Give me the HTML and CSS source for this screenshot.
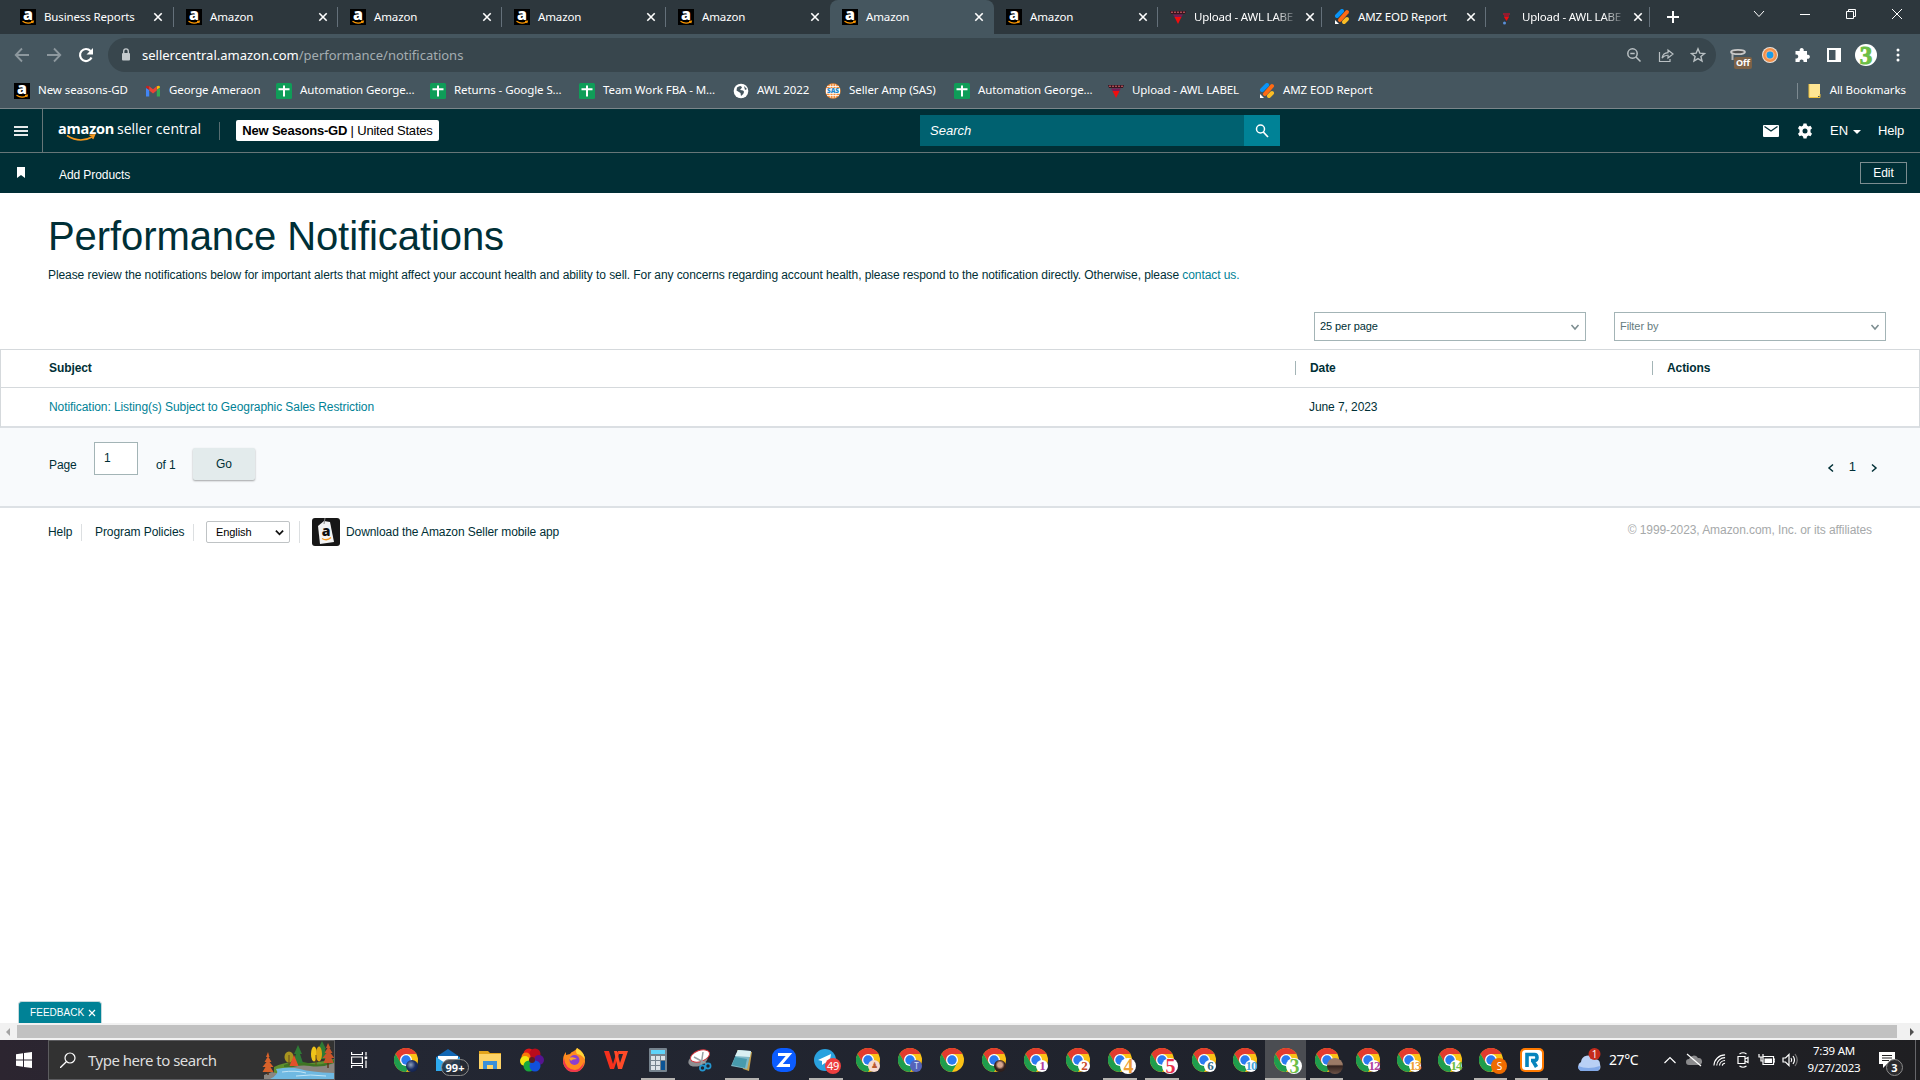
FILE: index.html
```html
<!DOCTYPE html>
<html lang="en">
<head>
    <meta charset="UTF-8">
    <meta name="viewport" content="width=device-width, initial-scale=1.0">
    <title>Performance Notifications</title>
    <link rel="stylesheet" href="styles.css">
</head>
<body>
    <!-- Shared icons -->
    <svg class="sprite" width="0" height="0">
        <symbol id="amazon" viewBox="0 0 16 16">
            <rect width="16" height="16" fill="#000"/>
            <text x="8" y="11" text-anchor="middle" font-family="Open Sans" font-weight="800" font-size="16" fill="#fff">a</text>
            <path d="M2.500 12.200q5 3.400 10 .7M11 12.200l2.400-.1-.6 2" fill="none" stroke="#f90" stroke-width="1.100"/>
        </symbol>
        <symbol id="awl" viewBox="0 0 16 16">
            <path d="M0 2h16l-1 3H1z" fill="#3a1420"/>
            <path d="M1 3.200h14" stroke="#d9676b" stroke-width="1" stroke-dasharray="2 1"/>
            <path d="M3 5.500h10L11 8.500H5z" fill="#7d1a55"/>
            <path d="M4.500 8h7L8 15z" fill="#f10d0d"/>
        </symbol>
        <symbol id="awl-small" viewBox="0 0 16 16">
            <path d="M5 5h7M6 7h5" stroke="#b3142b" stroke-width="1.500"/>
            <path d="M6 8h5l-2.500 4z" fill="#f10d0d"/>
            <circle cx="6.500" cy="14" r="1.500" fill="#5b8fd8"/>
        </symbol>
        <symbol id="eod" viewBox="0 0 16 16">
            <path d="M3 7l5-5" stroke="#0a94f5" stroke-width="4" stroke-linecap="round"/>
            <path d="M6 11l7-8" stroke="#ff6a13" stroke-width="4" stroke-linecap="round"/>
            <path d="M10 13l3-3" stroke="#fbbd24" stroke-width="4" stroke-linecap="round"/>
            <path d="M1 11l4 4H1z" fill="#fff"/>
        </symbol>
        <symbol id="sheet" viewBox="0 0 16 16">
            <rect width="16" height="16" rx="1.500" fill="#0f9d58"/>
            <path d="M2.500 6.200h11M8 2.500v11" stroke="#fff" stroke-width="2"/>
        </symbol>
        <symbol id="gmail" viewBox="0 0 16 16">
            <path d="M1 5v8.500h3.200V7z" fill="#4285f4"/>
            <path d="M15 5v8.500h-3.200V7z" fill="#34a853"/>
            <path d="M1 4.500l3.200 2.300v-3.500Q1 1.500 1 4.500z" fill="#c5221f"/>
            <path d="M15 4.500l-3.200 2.300v-3.500Q15 1.500 15 4.500z" fill="#fbbc04"/>
            <path d="M4.200 3.300L8 6.200l3.800-2.900v4.200L8 10.400 4.200 7.500z" fill="#ea4335"/>
        </symbol>
        <symbol id="x" viewBox="0 0 16 16">
            <path d="M4.300 4.300l7.400 7.400M11.700 4.300l-7.400 7.400" stroke="#fff" stroke-width="1.600"/>
        </symbol>
        <symbol id="chrome" viewBox="0 0 24 24">
            <circle cx="12" cy="12" r="12" fill="#fbc116"/>
            <path d="M12 6h10.400A12 12 0 0 0 1.600 6l5.200 9z" fill="#e33b2e"/>
            <path d="M1.600 6A12 12 0 0 0 12 24l5.200-9H12L6.800 15z" fill="#1f9d4d"/>
            <circle cx="12" cy="12" r="6" fill="#fff"/>
            <circle cx="12" cy="12" r="4.700" fill="#2b7bf0"/>
        </symbol>
        <symbol id="chevron" viewBox="0 0 10 10">
            <path d="M1.500 3l3.500 4 3.500-4" fill="none" stroke="currentColor" stroke-width="1.500"/>
        </symbol>
    </svg>

    <!-- Tab strip -->
    <div class="tab-strip">
        <div class="tab"><svg class="ico"><use href="#amazon"/></svg><span>Business Reports</span><svg class="ico"><use href="#x"/></svg></div>
        <div class="tab"><svg class="ico"><use href="#amazon"/></svg><span>Amazon</span><svg class="ico"><use href="#x"/></svg></div>
        <div class="tab"><svg class="ico"><use href="#amazon"/></svg><span>Amazon</span><svg class="ico"><use href="#x"/></svg></div>
        <div class="tab"><svg class="ico"><use href="#amazon"/></svg><span>Amazon</span><svg class="ico"><use href="#x"/></svg></div>
        <div class="tab no-line"><svg class="ico"><use href="#amazon"/></svg><span>Amazon</span><svg class="ico"><use href="#x"/></svg></div>
        <div class="tab active no-line"><svg class="ico"><use href="#amazon"/></svg><span>Amazon</span><svg class="ico"><use href="#x"/></svg></div>
        <div class="tab"><svg class="ico"><use href="#amazon"/></svg><span>Amazon</span><svg class="ico"><use href="#x"/></svg></div>
        <div class="tab"><svg class="ico"><use href="#awl"/></svg><span class="fade">Upload - AWL LABE</span><svg class="ico"><use href="#x"/></svg></div>
        <div class="tab"><svg class="ico"><use href="#eod"/></svg><span>AMZ EOD Report</span><svg class="ico"><use href="#x"/></svg></div>
        <div class="tab"><svg class="ico"><use href="#awl-small"/></svg><span class="fade">Upload - AWL LABE</span><svg class="ico"><use href="#x"/></svg></div>
        <svg class="new-tab" viewBox="0 0 12 12"><path d="M6 0v12M0 6h12" stroke="#fff" stroke-width="2"/></svg>
        <div class="window-controls">
            <svg viewBox="0 0 12 12"><path d="M1 3l5 5.500L11 3" /></svg>
            <svg viewBox="0 0 12 12"><path d="M1 6.500h10"/></svg>
            <svg viewBox="0 0 12 12"><path d="M1.500 3.500h7v7h-7zM3.500 3.500v-2h7v7h-2"/></svg>
            <svg viewBox="0 0 12 12"><path d="M1 1l10 10M11 1L1 11"/></svg>
        </div>
    </div>

    <!-- Toolbar -->
    <div class="toolbar">
        <div class="cell dim"><svg class="ico" viewBox="0 0 16 16"><path d="M15 8H2M8 1.500L1.700 8 8 14.500" fill="none" stroke="currentColor" stroke-width="1.800"/></svg></div>
        <div class="cell dim"><svg class="ico" viewBox="0 0 16 16"><path d="M1 8h13M8 1.500L14.300 8 8 14.500" fill="none" stroke="currentColor" stroke-width="1.800"/></svg></div>
        <div class="cell"><svg class="ico" viewBox="0 0 16 16"><path d="M13.500 10.500A6 6 0 1 1 12.500 4" fill="none" stroke="#fff" stroke-width="2.200"/><path d="M15 1v6.500H8.500z" fill="#fff"/></svg></div>
        <div class="omnibox">
            <svg class="ico" viewBox="0 0 16 16"><rect x="4" y="6" width="8" height="7.500" rx="1" fill="#c4cacd"/><path d="M5.700 6V4.200a2.300 2.300 0 0 1 4.600 0V6" fill="none" stroke="#c4cacd" stroke-width="1.400"/></svg>
            <div class="url">sellercentral.amazon.com<span>/performance/notifications</span></div>
            <div class="cell dim2"><svg class="ico" viewBox="0 0 16 16"><circle cx="6.500" cy="6.500" r="4.700" fill="none" stroke="currentColor" stroke-width="1.500"/><path d="M4.300 6.500h4.400M10 10l4.500 4.500" stroke="currentColor" stroke-width="1.500"/></svg></div>
            <div class="cell dim2"><svg class="ico" viewBox="0 0 16 16"><path d="M1.500 5v9.500h10.500V12M4 11q1-5 6-5.300V3l5 4-5 4V8.300Q6.500 8 4 11z" fill="none" stroke="currentColor" stroke-width="1.200"/></svg></div>
            <div class="cell dim2"><svg class="ico" viewBox="0 0 16 16"><path d="M8 1.800l1.800 4.300 4.700.4-3.600 3 1.100 4.600L8 11.600l-4 2.500 1.100-4.600-3.600-3 4.700-.4z" fill="none" stroke="currentColor" stroke-width="1.400"/></svg></div>
        </div>
        <div class="extensions">
            <div class="cell ext-off"><svg class="ico" viewBox="0 0 16 16"><ellipse cx="8" cy="5" rx="7" ry="2.200" fill="#4d4d4d" stroke="#c9c9c9" stroke-width="1.800"/><path d="M2.500 7v6" stroke="#b5b5b5" stroke-width="2"/></svg><span class="off-badge">Off</span></div>
            <div class="cell"><svg class="ico" viewBox="0 0 16 16"><circle cx="8" cy="8" r="8" fill="#e9e3dc"/><circle cx="8" cy="8" r="7" fill="#f39049"/><circle cx="8" cy="8" r="4.700" fill="#f7b283"/><circle cx="8" cy="8" r="3.400" fill="#179bea"/></svg></div>
            <div class="cell"><svg class="ico" viewBox="0 0 16 16"><path d="M1.500 4h4.300a2.100 2.100 0 1 1 3.800 0H13v3.800a2.100 2.100 0 1 1 0 3.900V15H9.500a2 2 0 1 0-3.800 0H1.500v-3.500a2.100 2.100 0 1 0 0-4z" fill="#fff"/></svg></div>
            <div class="cell"><svg class="ico" viewBox="0 0 16 16"><rect x="2" y="2" width="12" height="12" fill="none" stroke="#fff" stroke-width="2"/><rect x="9.500" y="2" width="5" height="12" fill="#fff"/></svg></div>
            <div class="cell"><div class="avatar">3</div></div>
            <div class="cell"><svg class="ico" viewBox="0 0 16 16" fill="#fff"><circle cx="8" cy="3" r="1.500"/><circle cx="8" cy="8" r="1.500"/><circle cx="8" cy="13" r="1.500"/></svg></div>
        </div>
    </div>

    <!-- Bookmarks -->
    <div class="bookmarks">
        <div class="bookmark"><svg class="ico"><use href="#amazon"/></svg><span>New seasons-GD</span></div>
        <div class="bookmark"><svg class="ico"><use href="#gmail"/></svg><span>George Ameraon</span></div>
        <div class="bookmark"><svg class="ico"><use href="#sheet"/></svg><span>Automation George...</span></div>
        <div class="bookmark"><svg class="ico"><use href="#sheet"/></svg><span>Returns - Google S...</span></div>
        <div class="bookmark"><svg class="ico"><use href="#sheet"/></svg><span>Team Work FBA - M...</span></div>
        <div class="bookmark"><svg class="ico" viewBox="0 0 16 16"><circle cx="8" cy="8" r="7.300" fill="#fff"/><path d="M4 4.500q4-3 5 0l-2 2.500q4 0 4 2t-3 4l-.5-3-4-2.500zM11 3l3 3-2 1z" fill="#45565f"/></svg><span>AWL 2022</span></div>
        <div class="bookmark"><svg class="ico" viewBox="0 0 16 16"><circle cx="8" cy="8" r="7.700" fill="#f28c38"/><path d="M2 3.500h12M2 12.500h12M8 1v14M5.500 1.500q-2 6.500 0 13M10.500 1.500q2 6.500 0 13" stroke="#fff" stroke-width=".8" fill="none"/><rect x="1" y="5.300" width="14" height="5.400" fill="#fff"/><text x="8" y="10.300" text-anchor="middle" font-family="Open Sans" font-weight="800" font-size="6.500" fill="#2187c9">SAS</text></svg><span>Seller Amp (SAS)</span></div>
        <div class="bookmark"><svg class="ico"><use href="#sheet"/></svg><span>Automation George...</span></div>
        <div class="bookmark"><svg class="ico"><use href="#awl"/></svg><span>Upload - AWL LABEL</span></div>
        <div class="bookmark"><svg class="ico"><use href="#eod"/></svg><span>AMZ EOD Report</span></div>
        <div class="all-bookmarks"><svg class="ico" viewBox="0 0 16 16"><path d="M3 1h11v12h-2v1H3z" fill="#ffe694"/><path d="M3 1v13.500h11V11" fill="none" stroke="#f0c23c"/></svg><span>All Bookmarks</span></div>
    </div>

    <!-- Seller Central header -->
    <div class="sc-header">
        <div class="menu-btn"><i></i><i></i><i></i></div>
        <div class="logo">
            <span class="logo-amazon">amazon</span><span class="logo-sc">seller central</span>
            <svg class="smile" viewBox="0 0 30 8"><path d="M1 1.500q13 8.500 26 1M23.500 1.200l5-.3-1.800 4" fill="none" stroke="#f7981d" stroke-width="1.500"/></svg>
        </div>
        <div class="account"><b>New Seasons-GD</b>&nbsp;|&nbsp;United States</div>
        <div class="search"><span>Search</span><div class="search-btn"><svg class="ico" viewBox="0 0 16 16"><circle cx="6.500" cy="6" r="4" fill="none" stroke="#fff" stroke-width="1.500"/><path d="M9.300 9l4.700 5" stroke="#fff" stroke-width="1.700"/></svg></div></div>
        <div class="sc-right">
            <svg class="ico mail" viewBox="0 0 16 16"><rect y="2" width="16" height="12" rx="1" fill="#fff"/><path d="M1.500 3.500L8 8l6.500-4.500" fill="none" stroke="#002f36" stroke-width="1.300"/></svg>
            <svg class="ico gear" viewBox="0 0 16 16"><path d="M6.500.5h3l.5 2 1.500.9 2-.7 1.500 2.600-1.500 1.500v2.400l1.500 1.500-1.500 2.600-2-.7-1.500.9-.5 2h-3l-.5-2-1.500-.9-2 .7L1 10.700l1.500-1.500V6.800L1 5.300l1.500-2.600 2 .7L6 2.500z" fill="#fff"/><circle cx="8" cy="8" r="2.500" fill="#002f36"/></svg>
            <span class="lang">EN</span><i class="caret"></i><span class="help">Help</span>
        </div>
    </div>
    <div class="sc-subnav">
        <svg class="flag" viewBox="0 0 8 11"><path d="M0 0h8v11L4 8l-4 3z" fill="#fff"/></svg>
        <span>Add Products</span>
        <div class="edit-btn">Edit</div>
    </div>

    <!-- Page content -->
    <main>
        <h1>Performance Notifications</h1>
        <p class="intro">Please review the notifications below for important alerts that might affect your account health and ability to sell. For any concerns regarding account health, please respond to the notification directly. Otherwise, please <a>contact us.</a></p>
        <div class="filters">
            <div class="dropdown">25 per page<svg><use href="#chevron"/></svg></div>
            <div class="dropdown placeholder">Filter by<svg><use href="#chevron"/></svg></div>
        </div>

        <div class="grid">
            <div class="row head"><div>Subject</div><div>Date</div><div>Actions</div></div>
            <div class="row"><div><a>Notification: Listing(s) Subject to Geographic Sales Restriction</a></div><div>June 7, 2023</div><div></div></div>
        </div>

        <div class="pagination">
            <span class="page-label">Page</span>
            <div class="page-input">1</div>
            <span class="page-of">of 1</span>
            <div class="go-btn">Go</div>
            <div class="pager"><svg class="prev"><use href="#chevron"/></svg><span>1</span><svg class="next"><use href="#chevron"/></svg></div>
        </div>

        <footer>
            <span class="f-help">Help</span>
            <span class="f-policies">Program Policies</span>
            <div class="f-lang"><div class="lang-select">English<svg viewBox="0 0 10 10"><path d="M1 3l4 4 4-4" fill="none" stroke="#111" stroke-width="2"/></svg></div></div>
            <svg class="app-icon" viewBox="0 0 28 28"><rect width="28" height="28" rx="3" fill="#171717"/><path d="M6 8l6-5 6 1 4 20-14 2z" fill="#f4f4f4"/><path d="M12 6l1-6" stroke="#888" fill="none"/><text x="14" y="18" text-anchor="middle" font-family="Open Sans" font-weight="800" font-size="14" fill="#111">a</text><path d="M10 20.500q5 3 9-1" stroke="#f7981d" fill="none" stroke-width="1.300"/></svg>
            <span>Download the Amazon Seller mobile app</span>
            <span class="copyright">© 1999-2023, Amazon.com, Inc. or its affiliates</span>
        </footer>
    </main>

    <div class="feedback">FEEDBACK<svg viewBox="0 0 8 8"><path d="M1 1l6 6M7 1L1 7" stroke="#fff" stroke-width="1.200"/></svg></div>
    <div class="scrollbar"><i class="arrow-left"></i><div class="thumb"></div><i class="arrow-right"></i></div>

    <!-- Windows taskbar -->
    <div class="taskbar">
        <div class="start"><svg viewBox="0 0 16 16" fill="#fff"><path d="M0 2.300l7-1v6.300H0zM8 1.100L16 0v7.600H8zM0 8.500h7v6.300l-7-1zM8 8.500h8V16l-8-1.100z"/></svg></div>
        <div class="win-search">
            <svg class="lens" viewBox="0 0 16 16"><circle cx="10" cy="6" r="5" fill="none" stroke="#fff" stroke-width="1.200"/><path d="M6.300 9.700L0 16" stroke="#fff" stroke-width="1.300"/></svg>
            <span>Type here to search</span>
            <svg class="scene" viewBox="0 0 72 38">
                <path d="M12 26Q24 20 34 22T72 18v20H12z" fill="#5f8f2d"/>
                <path d="M22 24q12-6 24-2t26-3v8q-26 2-50-1z" fill="#3f7424"/>
                <path d="M22 29q14-6 26-4t24-3v16H30z" fill="#8b8680"/>
                <path d="M2 34l8-3 8 2v5H2z" fill="#8b8680"/>
                <path d="M14 28q14-3 24 0t34 4v6H8q10-5 6-10z" fill="#6fb9e2"/>
                <path d="M20 31q14-2 24 1M34 35q14-2 30 0" stroke="#c3e5f6" fill="none"/>
                <path d="M36 4l-4 9h2l-3 9h10l-3-9h2z" fill="#2f7a35"/>
                <path d="M60 0l-4 8h2l-3 10h11l-3-10h1z" fill="#2f7a35"/>
                <ellipse cx="27" cy="16" rx="4.500" ry="5.500" fill="#a8941f"/>
                <ellipse cx="52" cy="13" rx="3" ry="7.500" fill="#f0c419"/>
                <ellipse cx="57" cy="13" rx="3" ry="7.500" fill="#d9a514"/>
                <path d="M27 14v10M54 14v10" stroke="#6b4a1b"/>
                <path d="M32 14l-4.500 11h9z" fill="#e2512a"/>
                <path d="M6 11l-2 5h1.500l-3 5h2l-4 5h3l-3 5h11l-3-5h3l-4-5h2l-3-5h1z" fill="#d8622a"/>
                <path d="M66 2l-2 5h1.500l-3 5h2l-4 5h3l-2 5h10l-2-5h3l-4-5h2l-3-5h1z" fill="#c9552a"/>
                <path d="M6 31v3M66 22v5" stroke="#5a3618" stroke-width="1.500"/>
            </svg>
        </div>
        <div class="task-view"><svg viewBox="0 0 16 16" fill="none" stroke="#fff" stroke-width="1.200"><path d="M.6 0v2.500h10.800V0M.6 5h10.800v6.500H.6zM.6 16v-2.500h10.800V16M15 0v3.500M15 8.500V16"/><path d="M13.600 4.500h2.600v2.600h-2.600z" fill="#fff" stroke="none"/></svg></div>

        <div class="apps">
            <div class="app"><svg><use href="#chrome"/></svg><i class="badge earth"></i></div>
            <div class="app"><svg viewBox="0 0 24 24"><path d="M0 9l12-8 12 8v13H0z" fill="#1267b4"/><path d="M2 8h20v8H2z" fill="#fff"/><path d="M0 9l12 8 12-8v14H0z" fill="#2da9ee"/></svg><i class="badge count">99+</i></div>
            <div class="app"><svg viewBox="0 0 24 24"><path d="M1 3h9l2 2h11v5H1z" fill="#e3a41b"/><path d="M1 6h22v15H1z" fill="#fdd367"/><path d="M5 21v-8h14v8h-4v-4H9v4z" fill="#3a8fd8"/></svg></div>
            <div class="app"><svg viewBox="0 0 24 24"><circle cx="9" cy="6" r="5.500" fill="#e01818"/><circle cx="15" cy="6" r="5.500" fill="#b90c1c"/><circle cx="19" cy="12" r="5" fill="#55148f"/><circle cx="6" cy="9" r="4.500" fill="#f97a09"/><circle cx="5" cy="13" r="5" fill="#f5e60f"/><circle cx="9" cy="18" r="5.500" fill="#19a83c"/><circle cx="15" cy="18" r="5.500" fill="#1150dc"/><circle cx="12" cy="12" r="3" fill="#5c1d1d"/></svg></div>
            <div class="app"><svg viewBox="0 0 24 24"><path d="M12 3q3-2 3-3 8 4 8 13a11 11 0 0 1-22 0Q1 7 4 4v3l4-1q1-2 4-3z" fill="#ff8a1f"/><path d="M15 0q8 5 8 12-2-5-8-6-2-3 0-6z" fill="#ffd73a"/><path d="M2 10q1 11 11 12 6-1 9-8-1 10-10 10T1 14z" fill="#f0354e"/><circle cx="12.500" cy="12" r="5" fill="#8b3fd0"/><path d="M7 10q4-2 8 1-5 0-6 2z" fill="#ffa329"/></svg></div>
            <div class="app"><svg viewBox="0 0 24 24"><path d="M0 3h5l4 13 3-10 2-3h2l-6 18H6z" fill="#f5301d"/><path d="M10 3h3l3 12 3-9h-4l-1-3h10l-6 18h-4z" fill="#ff4a28"/></svg></div>
            <div class="app open"><svg viewBox="0 0 24 24"><rect x="3" width="18" height="24" rx="1" fill="#76838e"/><rect x="5" y="2" width="14" height="4" fill="#5fd3fa"/><path d="M5 8h4v4H5zM10 8h4v4h-4zM15 8h4v4h-4zM5 13h4v4H5zM10 13h4v4h-4zM5 18h4v4H5zM10 18h4v4h-4z" fill="#dde3e8"/><rect x="15" y="13" width="4" height="9" fill="#0b5394"/></svg></div>
            <div class="app"><svg viewBox="0 0 24 24"><ellipse cx="10" cy="12" rx="10" ry="6" transform="rotate(-20 10 12)" fill="#8d8f92"/><ellipse cx="12" cy="8" rx="10" ry="5.500" transform="rotate(-20 12 8)" fill="#fff" stroke="#d2333b"/><path d="M6 9l13 7M15 4l-2 14" stroke="#9aa0a5" stroke-width="1.500"/><circle cx="20" cy="18" r="2.600" fill="none" stroke="#2496cf" stroke-width="1.700"/><circle cx="14.500" cy="20" r="2.600" fill="none" stroke="#2496cf" stroke-width="1.700"/></svg></div>
            <div class="app open"><svg viewBox="0 0 24 24"><path d="M7 2l15 2-3 19-6-2z" fill="#c5a04e"/><path d="M8 2l13 1-4 18-16-3z" fill="#7fb9c8"/><path d="M8 2l13 1-1 6L5 8z" fill="#d9f0f2"/><path d="M5 9l12 2-2 9-13-3z" fill="#489bad"/></svg></div>
            <div class="app"><svg viewBox="0 0 24 24"><rect width="24" height="24" rx="9" fill="#0b5cff"/><path d="M6 6.500h11l-9.500 11H18" fill="none" stroke="#fff" stroke-width="3"/></svg></div>
            <div class="app open"><svg viewBox="0 0 24 24"><circle cx="11" cy="12" r="11" fill="#2aa1de"/><path d="M4 12l13-6-2 12-4-3-3 2v-4z" fill="#fff"/></svg><i class="badge red">49</i></div>
            <div class="app"><svg><use href="#chrome"/></svg><i class="badge peach">♟</i></div>
            <div class="app"><svg><use href="#chrome"/></svg><i class="badge indigo">T</i></div>
            <div class="app"><svg><use href="#chrome"/></svg></div>
            <div class="app"><svg><use href="#chrome"/></svg><i class="badge photo"></i></div>
            <div class="app"><svg><use href="#chrome"/></svg><i class="badge n1">1</i></div>
            <div class="app"><svg><use href="#chrome"/></svg><i class="badge n2">2</i></div>
            <div class="app open"><svg><use href="#chrome"/></svg><i class="badge big n4">4</i></div>
            <div class="app open"><svg><use href="#chrome"/></svg><i class="badge big n5">5</i></div>
            <div class="app"><svg><use href="#chrome"/></svg><i class="badge n6">6</i></div>
            <div class="app"><svg><use href="#chrome"/></svg><i class="badge n10">10</i></div>
            <div class="app open current"><svg><use href="#chrome"/></svg><i class="badge big n3">3</i></div>
            <div class="app open"><svg><use href="#chrome"/></svg><i class="badge big photo2"></i></div>
            <div class="app"><svg><use href="#chrome"/></svg><i class="badge n12">12</i></div>
            <div class="app"><svg><use href="#chrome"/></svg><i class="badge n13">13</i></div>
            <div class="app"><svg><use href="#chrome"/></svg><i class="badge n14">14</i></div>
            <div class="app open"><svg><use href="#chrome"/></svg><i class="badge big orange">S</i></div>
            <div class="app open"><svg viewBox="0 0 24 24"><rect width="24" height="24" rx="5" fill="#ff7a00"/><rect x="2" y="2" width="20" height="20" rx="3.500" fill="#fff"/><path d="M7 19V6.500h7.500q2.500 0 2.500 3t-2.500 3H11M13 13l3.500 6" fill="none" stroke="#0684bd" stroke-width="3.600"/></svg></div>
        </div>

        <div class="tray">
            <div class="weather"><svg viewBox="0 0 26 24"><path d="M5 23a5 5 0 0 1 0-9 7 7 0 0 1 13-3q6 0 6 5 2 7-4 7z" fill="#b9d0f5"/><path d="M5 23a5 5 0 0 1-3-5q10 4 22 0 0 5-4 5z" fill="#82a9e8"/><circle cx="18.500" cy="6" r="6" fill="#c42b1c"/><text x="18.500" y="9.500" text-anchor="middle" font-family="Open Sans" font-size="10" fill="#fff">1</text></svg><span>27°C</span></div>
            <svg class="t-up" viewBox="0 0 12 8"><path d="M.5 7L6 1.500 11.500 7"/></svg>
            <svg class="t-cloud" viewBox="0 0 16 16"><path d="M3 13a3 3 0 0 1 0-6 5 5 0 0 1 9-1 3.500 3.500 0 0 1 1 7z" fill="#8b8b8d" stroke="none"/><path d="M1 2l14 12"/></svg>
            <svg class="t-wifi" viewBox="0 0 14 14"><path d="M1 13A12 12 0 0 1 13 1.500M4 13a9 9 0 0 1 9-8.500M7 13a6 6 0 0 1 6-5.500M10 13a3 3 0 0 1 3-2.500"/></svg>
            <svg class="t-meet" viewBox="0 0 12 16"><path d="M1 4.500h7v7H1zM8 7l3-1.500v5L8 9M2.500 2Q6-.5 9.500 2M2.500 14q3.500 2.500 7 0"/></svg>
            <svg class="t-battery" viewBox="0 0 17 14"><path d="M5 3.500h10.500v8H5zM1 1v3h4V1M3 4v4h2M15.500 6H17v3h-1.500"/><path d="M6.500 5.500h7.500v4.500H6.500z" fill="#fff" stroke="none"/></svg>
            <svg class="t-vol" viewBox="0 0 16 14"><path d="M1 5h2.500L7 1.500v11L3.500 9H1zM9 5q1.500 2 0 4M11 3q3 4 0 8"/><path d="M13 1q4.500 6 0 12" stroke="#777"/></svg>
            <div class="clock"><div>7:39 AM</div><div>9/27/2023</div></div>
            <div class="notif"><svg viewBox="0 0 16 16"><path d="M0 0h16v12H8l-4 4v-4H0z" fill="#fff"/><path d="M3 3.500h10M3 6h10M3 8.500h7" stroke="#222"/></svg><i>3</i></div>
        </div>
    </div>
</body>
</html>
```

FILE: styles.css
```css
/* Global Styles */
* {
    box-sizing: border-box;
}

body {
    margin: 0;
    width: 1920px;
    height: 1080px;
    overflow: hidden;
    display: flex;
    flex-direction: column;
    font-family: "Liberation Sans", Arial, sans-serif;
    font-size: 12px;
    color: #002f36;
    background: #fff;
}

svg {
    display: block;
    flex: none;
}

i {
    font-style: normal;
}

.sprite {
    display: none;
}

.ico {
    width: 16px;
    height: 16px;
}

/* Tab strip */
.tab-strip {
    height: 34px;
    padding-left: 9px;
    display: flex;
    background: #2d373d;
    font-family: "Noto Sans", sans-serif;
    font-size: 11.5px;
    color: #fff;
}

.tab {
    position: relative;
    flex: none;
    width: 164px;
    padding: 0 7px 0 12px;
    display: flex;
    align-items: center;
    gap: 8px;
}

.tab:first-child {
    width: 165px;
}

.tab-strip .tab:nth-child(1) {
    width: 165px;
    padding: 0 8px 0 11px;
}

.tab span {
    flex: 1;
    padding-bottom: 2px;
    white-space: nowrap;
    letter-spacing: -0.13px;
}

.tab .fade {
    flex: 0 0 104px;
    margin-right: -4px;
    letter-spacing: -0.2px;
    -webkit-mask-image: linear-gradient(to right, #000 78%, rgba(0, 0, 0, 0.1) 98%);
    mask-image: linear-gradient(to right, #000 78%, rgba(0, 0, 0, 0.1) 98%);
}

.tab::after {
    content: "";
    position: absolute;
    right: 0;
    top: 7px;
    width: 1px;
    height: 20px;
    background: #64707a;
}

.tab.no-line::after {
    display: none;
}

.tab.active {
    background: #45565f;
    border-radius: 8px 8px 0 0;
}

.new-tab {
    width: 12px;
    height: 12px;
    margin: 11px 0 0 17px;
}

.window-controls {
    margin: 8px 17px 0 auto;
    display: flex;
    gap: 34px;
}

.window-controls svg {
    width: 12px;
    height: 12px;
    fill: none;
    stroke: #fff;
}

/* Toolbar */
.toolbar {
    height: 39px;
    padding: 4px 6px 1px;
    display: flex;
    background: #45565f;
}

.cell {
    position: relative;
    width: 32px;
    height: 34px;
    display: flex;
    align-items: center;
    justify-content: center;
}

.dim {
    color: #8d989e;
}

.dim2 {
    color: #b9c0c3;
}

.omnibox {
    width: 1608px;
    height: 34px;
    margin: 0 6px;
    padding: 0 2px 0 10px;
    display: flex;
    align-items: center;
    border-radius: 17px;
    background: #38464d;
}

.url {
    flex: 1;
    margin-left: 8px;
    font-family: "Noto Sans", sans-serif;
    font-size: 13px;
    letter-spacing: 0;
    color: #fff;
}

.url span {
    color: #a4adb1;
}

.extensions {
    display: flex;
}

.off-badge {
    position: absolute;
    left: 12px;
    top: 19px;
    width: 18px;
    height: 12px;
    border-radius: 2px;
    background: #7d6247;
    color: #fff;
    font: bold 9px/12px "Open Sans", sans-serif;
    text-align: center;
}

.avatar {
    width: 22px;
    height: 22px;
    border-radius: 50%;
    background: #fff;
    color: #6cbe45;
    font: bold 25px/23px "Liberation Serif", serif;
    text-align: center;
    -webkit-text-stroke: 1px #6cbe45;
}

/* Bookmarks */
.bookmarks {
    height: 36px;
    padding: 0 14px;
    display: grid;
    grid-template-columns: 131px 131px 154px 149px 154px 92px 129px 154px 151px 160px 1fr;
    align-items: center;
    background: #45565f;
    border-bottom: 1px solid #7b868a;
    color: #fff;
    font-family: "Noto Sans", sans-serif;
    font-size: 11.5px;
    letter-spacing: -0.08px;
}

.bookmark, .all-bookmarks {
    display: flex;
    align-items: center;
    gap: 8px;
    white-space: nowrap;
}

.bookmarks span {
    padding-bottom: 2px;
}

.all-bookmarks {
    justify-self: end;
    height: 16px;
    padding-left: 8px;
    border-left: 1px solid #7d8a91;
}

/* Seller Central header */
.sc-header {
    height: 44px;
    display: flex;
    align-items: center;
    background: #002f36;
    border-bottom: 1px solid #677678;
    color: #fff;
    font-size: 13px;
}

.menu-btn {
    width: 43px;
    height: 43px;
    padding-left: 14px;
    display: flex;
    flex-direction: column;
    justify-content: center;
    gap: 2px;
    border-right: 1px solid #677678;
}

.menu-btn i {
    width: 14px;
    height: 2px;
    background: #e6eaeb;
}

.logo {
    position: relative;
    width: 177px;
    height: 18px;
    padding-left: 15px;
    border-right: 1px solid #566d71;
    font-family: "Open Sans", sans-serif;
    line-height: 14px;
    white-space: nowrap;
}

.logo-amazon {
    display: inline-block;
    width: 59px;
    font-size: 14.5px;
    font-weight: 700;
    letter-spacing: -0.2px;
}

.logo-sc {
    font-size: 14px;
    letter-spacing: 0;
}

.smile {
    position: absolute;
    left: 23px;
    top: 12px;
    width: 30px;
    height: 8px;
}

.account {
    width: 203px;
    height: 21px;
    margin-left: 16px;
    border-radius: 2px;
    background: #fff;
    color: #000;
    line-height: 21px;
    text-align: center;
    white-space: nowrap;
    letter-spacing: -0.2px;
}

.search {
    width: 360px;
    height: 31px;
    margin-left: 481px;
    padding-left: 10px;
    display: flex;
    align-items: center;
    justify-content: space-between;
    background: #006170;
    font-style: italic;
}

.search-btn {
    width: 36px;
    height: 31px;
    display: flex;
    align-items: center;
    justify-content: center;
    background: #008296;
}

.sc-right {
    margin-left: auto;
    padding-right: 16px;
    display: flex;
    align-items: center;
}

.gear {
    margin: 0 17px 0 18px;
}

.caret {
    margin: 2px 17px 0 5px;
    border: 4px solid transparent;
    border-top-color: #fff;
    border-bottom: 0;
}

.help {
    letter-spacing: -0.2px;
}

.sc-subnav {
    height: 40px;
    padding: 0 13px 0 17px;
    display: flex;
    align-items: center;
    background: #002f36;
    color: #fff;
    letter-spacing: -0.08px;
}

.flag {
    width: 8px;
    height: 11px;
    margin-bottom: 1px;
}

.sc-subnav span {
    margin: 3px 0 0 34px;
}

.edit-btn {
    width: 47px;
    height: 22px;
    margin-left: auto;
    border: 1px solid #7b8c8f;
    line-height: 20px;
    text-align: center;
}

/* Page content */
main {
    height: 808px;
    letter-spacing: -0.08px;
}

h1 {
    margin: 0;
    padding: 20px 0 0 48px;
    font-size: 40px;
    line-height: 46px;
    font-weight: 400;
}

.intro {
    margin: 9px 0 0 48px;
    line-height: 14px;
    white-space: nowrap;
}

a {
    color: #008296;
}

.filters {
    height: 67px;
    padding: 30px 34px 0 0;
    display: flex;
    justify-content: flex-end;
    gap: 28px;
}

.dropdown {
    width: 272px;
    height: 29px;
    padding: 0 5px 1px;
    display: flex;
    align-items: center;
    justify-content: space-between;
    border: 1px solid #a3b4b6;
    font-size: 11px;
}

.dropdown svg {
    width: 10px;
    height: 10px;
    margin-top: 2px;
    color: #7b8c8f;
}

.placeholder {
    color: #657c80;
}

.grid {
    border: 1px solid #d5d9dc;
    border-bottom: 2px solid #dbdfe3;
}

.row {
    height: 38px;
    padding-left: 48px;
    display: grid;
    grid-template-columns: 1246px 357px 1fr;
    align-items: center;
}

.row > div + div {
    padding-left: 14px;
}

.row.head {
    padding-bottom: 1px;
    border-bottom: 1px solid #d5d9dc;
    font-weight: bold;
}

.row.head > div + div {
    border-left: 1px solid #a3b4b6;
}

.pagination {
    height: 80px;
    padding: 0 41px 0 49px;
    display: flex;
    background: #f8fafc;
    border-bottom: 2px solid #dde1e5;
    line-height: 14px;
}

.page-label {
    width: 45px;
    margin-top: 30px;
}

.page-input {
    width: 44px;
    height: 33px;
    margin-top: 14px;
    padding-left: 9px;
    border: 1px solid #a3b4b6;
    background: #fff;
    line-height: 31px;
}

.page-of {
    width: 37px;
    margin: 30px 0 0 18px;
}

.go-btn {
    width: 62px;
    height: 32px;
    margin-top: 20px;
    border-radius: 2px;
    background: #e3ebec;
    box-shadow: 0 1px 2px rgba(0, 0, 0, 0.35);
    line-height: 32px;
    text-align: center;
}

.pager {
    margin: 34px 0 0 auto;
    display: flex;
    gap: 13px;
    font-size: 13px;
    line-height: 9px;
}

.pager svg {
    width: 10px;
    height: 10px;
    margin-top: 1px;
}

.prev {
    transform: rotate(90deg);
}

.next {
    transform: rotate(-90deg);
}

footer {
    height: 48px;
    padding: 0 48px;
    display: flex;
    align-items: center;
}

.f-help {
    width: 34px;
    border-right: 1px solid #dcdfe1;
    line-height: 17px;
}

.f-policies {
    width: 112px;
    padding-left: 13px;
    border-right: 1px solid #dcdfe1;
    line-height: 17px;
}

.f-lang {
    width: 106px;
    padding-left: 12px;
    border-right: 1px solid #dcdfe1;
}

.lang-select {
    width: 84px;
    height: 22px;
    padding: 0 5px 0 9px;
    display: flex;
    align-items: center;
    justify-content: space-between;
    border: 1px solid #bfc3c5;
    border-radius: 2px;
    font-size: 11px;
    color: #000;
}

.lang-select svg {
    width: 9px;
    height: 9px;
}

.app-icon {
    width: 28px;
    height: 28px;
    margin: 0 6px 0 12px;
}

.copyright {
    margin: -4px 0 0 auto;
    color: #a6a9aa;
}

/* Bottom of the browser window */
.feedback {
    width: 84px;
    height: 22px;
    margin-left: 18px;
    padding-left: 11px;
    display: flex;
    align-items: center;
    gap: 4px;
    border: 1px solid #c5d9dc;
    border-bottom: 0;
    border-radius: 4px 4px 0 0;
    background: #008296;
    color: #fff;
    font-size: 10px;
    letter-spacing: 0.05px;
}

.feedback svg {
    width: 8px;
    height: 8px;
}

.scrollbar {
    height: 17px;
    padding: 0 6px;
    display: flex;
    align-items: center;
    justify-content: space-between;
    background: #f1f1f1;
}

.thumb {
    width: 1880px;
    height: 13px;
    margin-right: 6px;
    background: #c1c1c1;
}

.arrow-left, .arrow-right {
    border: 4px solid transparent;
}

.arrow-left {
    border-left: 0;
    border-right-color: #a3a3a3;
}

.arrow-right {
    border-right: 0;
    border-left-color: #505050;
}

/* Windows taskbar */
.taskbar {
    height: 40px;
    display: flex;
    background: linear-gradient(to right, #2c2530, #232733 20%, #1f222b 70%, #1f1f22);
    color: #fff;
    font-family: "Noto Sans", sans-serif;
}

.start {
    width: 48px;
    padding: 12px 16px;
}

.start svg {
    width: 16px;
    height: 16px;
}

.win-search {
    width: 288px;
    display: flex;
    align-items: center;
    border: 1px solid #5c5c5f;
    background: #323232;
    color: #dedede;
    font-size: 15px;
    letter-spacing: -0.5px;
}

.lens {
    width: 16px;
    height: 16px;
    margin: 0 12px 0 11px;
}

.scene {
    width: 72px;
    height: 38px;
    margin-left: auto;
}

.task-view {
    width: 50px;
    padding: 12px 16px;
}

.task-view svg {
    width: 16px;
    height: 16px;
    overflow: visible;
}

.apps {
    display: grid;
    grid-template-columns: repeat(19, 42px) repeat(9, 41px);
}

.app {
    position: relative;
    display: flex;
    align-items: center;
    justify-content: center;
}

.app svg {
    width: 24px;
    height: 24px;
}

.app.open::after {
    content: "";
    position: absolute;
    left: 4px;
    right: 4px;
    bottom: 0;
    height: 2px;
    background: #b5b3b0;
}

.app.current {
    background: #4b4d52;
}

.app.current::after {
    left: 0;
    right: 0;
}

/* Small markers over the app icons */
.badge {
    position: absolute;
    left: 21px;
    top: 20px;
    width: 12px;
    height: 12px;
    border-radius: 50%;
    background: #fff;
    font: bold 13px/12px "Liberation Serif", serif;
    letter-spacing: -1px;
    text-align: center;
}

.badge.big {
    top: 18px;
    width: 16px;
    height: 16px;
    font-size: 20px;
    line-height: 16px;
}

.badge.count {
    left: 14px;
    top: 19px;
    width: 28px;
    height: 17px;
    border: 1px solid #8b8b8b;
    border-radius: 9px;
    background: rgba(38, 42, 50, 0.85);
    font: bold 11px/15px "Noto Sans", sans-serif;
    letter-spacing: 0;
    z-index: 1;
}

.badge.red {
    top: 18px;
    left: 20px;
    width: 16px;
    height: 16px;
    background: #ee3e3e;
    font: 11px/16px "Noto Sans", sans-serif;
    letter-spacing: -0.3px;
}

.badge.earth {
    background: radial-gradient(circle at 40% 40%, #8ea0bd, #1c2f63 45%, #0c1638);
}

.badge.peach {
    background: #f7d9cd;
    color: #b9592f;
    font: 8px/12px "DejaVu Sans", sans-serif;
}

.badge.indigo {
    background: #5563b9;
    color: #dfe3ff;
    font: 8px/12px "Noto Sans", sans-serif;
}

.badge.orange {
    background: #ef6c00;
    font: 10px/16px "Noto Sans", sans-serif;
}

.badge.photo {
    background: radial-gradient(circle at 50% 40%, #d7a58d 25%, #3a2420 50%, #191515);
}

.badge.photo2 {
    background: linear-gradient(to bottom, #9b7a66 40%, #33231f 50%, #6d5347);
}

.n1 { color: #b0409f; }
.n2 { color: #c94a2b; }
.n3 { color: #6cbe45; }
.n4 { color: #ef9f35; }
.n5 { color: #e72f4b; }
.n6 { color: #2f6b88; }
.n10 { color: #46a5dc; }
.n12 { color: #b0409f; }
.n13 { color: #ef9f35; }
.n14 { color: #6cbe45; }

/* Tray */
.tray {
    flex: 1;
    margin-left: 24px;
    display: flex;
    align-items: center;
}

.tray > svg {
    fill: none;
    stroke: #fff;
    stroke-width: 1.2;
}

.weather {
    width: 88px;
    display: flex;
    align-items: center;
    gap: 7px;
    font-size: 14px;
    letter-spacing: -0.4px;
}

.weather svg {
    width: 26px;
    height: 24px;
}

.weather span {
    padding-bottom: 1px;
}

.t-up {
    width: 12px;
    height: 8px;
    margin-right: 10px;
}

.t-cloud {
    width: 16px;
    height: 16px;
    margin-right: 11px;
}

.t-wifi {
    width: 13px;
    height: 14px;
    margin-right: 11px;
}

.t-meet {
    width: 12px;
    height: 16px;
    margin-right: 9px;
}

.t-battery {
    width: 17px;
    height: 14px;
    margin-right: 7px;
}

.t-vol {
    width: 16px;
    height: 14px;
}

.clock {
    width: 72px;
    padding-bottom: 2px;
    font-size: 11.5px;
    line-height: 17.5px;
    letter-spacing: -0.2px;
    text-align: center;
}

.notif {
    position: relative;
    width: 46px;
    height: 40px;
    margin-left: auto;
    margin-right: 4px;
    border-right: 1px solid #66666a;
}

.notif svg {
    width: 16px;
    height: 16px;
    margin: 12px 0 0 9px;
}

.notif i {
    position: absolute;
    left: 16px;
    top: 19px;
    width: 17px;
    height: 17px;
    border: 1px solid #8b8b8b;
    border-radius: 50%;
    background: #2b2b2e;
    font: bold 11px/15px "Noto Sans", sans-serif;
    text-align: center;
}
```
